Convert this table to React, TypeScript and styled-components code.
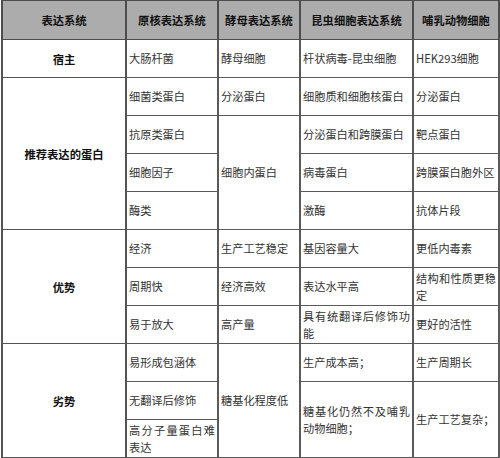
import * as React from "react";
import styled, { createGlobalStyle } from "styled-components";

const GlobalStyle = createGlobalStyle`
  body {
    margin: 0;
    background: #ffffff;
  }
`;

const Wrapper = styled.div`
  width: 500px;
  height: 458px;
  padding: 0 1px;
  box-sizing: border-box;
  font-family: "Noto Sans CJK SC", "Noto Sans", sans-serif;
`;

const Table = styled.table`
  width: 497px;
  table-layout: fixed;
  border-collapse: collapse;
  border: 1px solid #4d4d4d;
`;

const HeadCell = styled.th`
  background: #acacac;
  color: #111;
  font-size: 11.3px;
  font-weight: 700;
  text-align: center;
  border: 1px solid #4d4d4d;
  border-width: 1px 2px;
  padding: 0;
`;

const Row = styled.tr<{ $h?: number }>`
  height: ${(p) => p.$h ?? 38}px;
`;

const LabelCell = styled.td`
  color: #111;
  font-size: 11.3px;
  font-weight: 700;
  text-align: center;
  vertical-align: middle;
  border: 1px solid #555;
  border-width: 1px 2px;
  padding: 0;
`;

const Cell = styled.td`
  color: #333;
  font-size: 11.2px;
  line-height: 17px;
  text-align: justify;
  vertical-align: middle;
  border: 1px solid #5a5a5a;
  border-width: 1px 2px;
  padding: 0 2px 0 2px;
  word-break: break-all;
`;

export default function App() {
  return (
    <Wrapper>
      <GlobalStyle />
      <Table>
        <colgroup>
          <col style={{ width: 124 }} />
          <col style={{ width: 92 }} />
          <col style={{ width: 82 }} />
          <col style={{ width: 113 }} />
          <col style={{ width: 86 }} />
        </colgroup>
        <tbody>
          <Row $h={39}>
            <HeadCell>表达系统</HeadCell>
            <HeadCell>原核表达系统</HeadCell>
            <HeadCell>酵母表达系统</HeadCell>
            <HeadCell>昆虫细胞表达系统</HeadCell>
            <HeadCell>哺乳动物细胞</HeadCell>
          </Row>
          <Row>
            <LabelCell>宿主</LabelCell>
            <Cell>大肠杆菌</Cell>
            <Cell>酵母细胞</Cell>
            <Cell>杆状病毒-昆虫细胞</Cell>
            <Cell>HEK293细胞</Cell>
          </Row>
          <Row>
            <LabelCell rowSpan={4}>推荐表达的蛋白</LabelCell>
            <Cell>细菌类蛋白</Cell>
            <Cell>分泌蛋白</Cell>
            <Cell>细胞质和细胞核蛋白</Cell>
            <Cell>分泌蛋白</Cell>
          </Row>
          <Row>
            <Cell>抗原类蛋白</Cell>
            <Cell rowSpan={3}>细胞内蛋白</Cell>
            <Cell>分泌蛋白和跨膜蛋白</Cell>
            <Cell>靶点蛋白</Cell>
          </Row>
          <Row>
            <Cell>细胞因子</Cell>
            <Cell>病毒蛋白</Cell>
            <Cell>跨膜蛋白胞外区</Cell>
          </Row>
          <Row>
            <Cell>酶类</Cell>
            <Cell>激酶</Cell>
            <Cell>抗体片段</Cell>
          </Row>
          <Row>
            <LabelCell rowSpan={3}>优势</LabelCell>
            <Cell>经济</Cell>
            <Cell>生产工艺稳定</Cell>
            <Cell>基因容量大</Cell>
            <Cell>更低内毒素</Cell>
          </Row>
          <Row>
            <Cell>周期快</Cell>
            <Cell>经济高效</Cell>
            <Cell>表达水平高</Cell>
            <Cell>结构和性质更稳定</Cell>
          </Row>
          <Row>
            <Cell>易于放大</Cell>
            <Cell>高产量</Cell>
            <Cell>具有统翻译后修饰功能</Cell>
            <Cell>更好的活性</Cell>
          </Row>
          <Row>
            <LabelCell rowSpan={3}>劣势</LabelCell>
            <Cell>易形成包涵体</Cell>
            <Cell rowSpan={3}>糖基化程度低</Cell>
            <Cell>生产成本高；</Cell>
            <Cell>生产周期长</Cell>
          </Row>
          <Row>
            <Cell>无翻译后修饰</Cell>
            <Cell rowSpan={2}>糖基化仍然不及哺乳动物细胞；</Cell>
            <Cell rowSpan={2}>生产工艺复杂；</Cell>
          </Row>
          <Row>
            <Cell>高分子量蛋白难表达</Cell>
          </Row>
        </tbody>
      </Table>
    </Wrapper>
  );
}
